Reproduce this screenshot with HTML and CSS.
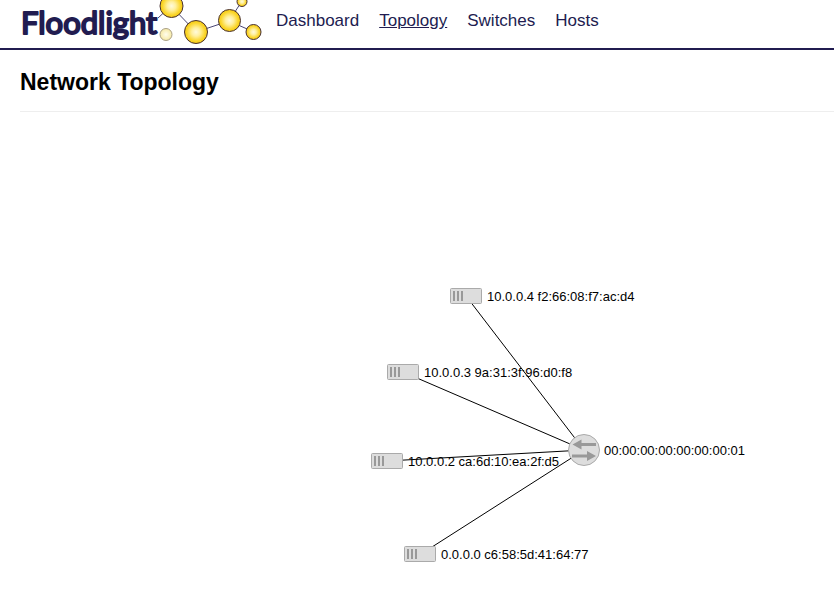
FILE: index.html
```html
<!DOCTYPE html>
<html lang="en">
<head>
  <meta charset="utf-8">
  <meta name="viewport" content="width=device-width, initial-scale=1">
  <title>Floodlight</title>
  <link rel="stylesheet" href="styles.css">
</head>
<body>
  <header class="topbar">
    <a class="brand" href="#">
      <svg class="logo" width="256" height="48" viewBox="0 0 256 48">
        <defs>
          <radialGradient id="gold" cx="50%" cy="50%" r="52%">
            <stop offset="0" stop-color="#fffadc"/>
            <stop offset=".35" stop-color="#fff0a0"/>
            <stop offset=".75" stop-color="#fbd62c"/>
            <stop offset="1" stop-color="#f3c60c"/>
          </radialGradient>
          <radialGradient id="pale">
            <stop offset="0" stop-color="#fffdee"/>
            <stop offset="1" stop-color="#f6e9a4"/>
          </radialGradient>
        </defs>
        <g class="logo-links">
          <path d="M148 18 161 6 186 32 219 21 232 1M219 21 244 32"/>
        </g>
        <text class="wordmark" x="11" y="34">Floodlight</text>
        <g class="logo-bulbs">
          <circle cx="161.500" cy="6" r="11.500"/>
          <circle cx="186" cy="32" r="11.500"/>
          <circle cx="219.500" cy="20.500" r="11"/>
          <circle cx="232" cy="1.500" r="5"/>
          <circle cx="243.500" cy="32" r="7.500"/>
        </g>
        <circle class="logo-dim" cx="156" cy="34.500" r="6"/>
      </svg>
    </a>
    <nav class="nav">
      <a href="#">Dashboard</a>
      <a class="current" href="#" aria-current="page">Topology</a>
      <a href="#">Switches</a>
      <a href="#">Hosts</a>
    </nav>
  </header>
  <main class="page">
    <h1>Network Topology</h1>
    <svg class="topology" role="img" aria-label="Network topology">
      <defs>
        <g id="host">
          <rect class="shape" x="-15.500" y="-7.500" width="31" height="15" rx="1"/>
          <path class="slots" d="M-12 -5V5M-8 -5V5M-4 -5V5"/>
        </g>
        <g id="switch">
          <circle class="shape" r="15.500"/>
          <path class="arrow" d="M-11.500 -5.500 -2.500 -10.500V-7H12V-4H-2.500V-.500ZM12 6 3 1V4.500H-12V7.500H3V11Z"/>
        </g>
      </defs>
      <g class="links">
        <line x1="564" y1="338" x2="446" y2="184"/>
        <line x1="564" y1="338" x2="383" y2="260"/>
        <line x1="564" y1="338" x2="367" y2="349"/>
        <line x1="564" y1="338" x2="401" y2="442"/>
      </g>
      <g transform="translate(446 184)"><use href="#host"/><text x="21" y="5">10.0.0.4 f2:66:08:f7:ac:d4</text></g>
      <g transform="translate(383 260)"><use href="#host"/><text x="21" y="5">10.0.0.3 9a:31:3f:96:d0:f8</text></g>
      <g transform="translate(367 349)"><use href="#host"/><text x="21" y="5">10.0.0.2 ca:6d:10:ea:2f:d5</text></g>
      <g transform="translate(400 442)"><use href="#host"/><text x="21" y="5">0.0.0.0 c6:58:5d:41:64:77</text></g>
      <g transform="translate(564 338)"><use href="#switch"/><text x="20" y="5">00:00:00:00:00:00:00:01</text></g>
    </svg>
  </main>
</body>
</html>
```
FILE: styles.css
```css
* {
  box-sizing: border-box;
}

body {
  margin: 0;
  min-height: 100vh;
  display: flex;
  flex-direction: column;
  background: #fff;
  color: #000;
  font-family: "Liberation Sans", Arial, sans-serif;
}

.topbar {
  display: flex;
  align-items: flex-start;
  gap: 10px;
  padding-left: 10px;
  border-bottom: 2px solid #211c50;
}

.brand,
.logo {
  display: block;
}

.wordmark {
  fill: #211c50;
  stroke: #211c50;
  stroke-width: 2px;
  stroke-linejoin: round;
  font: 31px Lato, sans-serif;
}

.logo-links {
  fill: none;
  stroke: #4a4675;
}

.logo-bulbs {
  fill: url(#gold);
  stroke: #473033;
  stroke-width: 1px;
}

.logo-dim {
  fill: url(#pale);
  stroke: #aaa087;
}

.nav {
  display: flex;
  gap: 20px;
  padding-top: 11px;
  font-size: 17px;
  line-height: 20px;
}

.nav a {
  color: #211c50;
  text-decoration: none;
}

.nav .current {
  text-decoration: underline;
}

.page {
  flex: 1;
  display: flex;
  flex-direction: column;
  padding-left: 20px;
}

h1 {
  margin: 0;
  padding: 18px 0 15px;
  border-bottom: 1px solid #eee;
  font-size: 23px;
  line-height: 28px;
}

.topology {
  flex: 1;
  width: 100%;
  min-height: 480px;
  font-size: 13px;
}

.links {
  stroke: #000;
}

.shape {
  fill: #ddd;
  stroke: #aaa;
}

.slots {
  stroke: #999;
  stroke-width: 2px;
}

.arrow {
  fill: #999;
}
```
